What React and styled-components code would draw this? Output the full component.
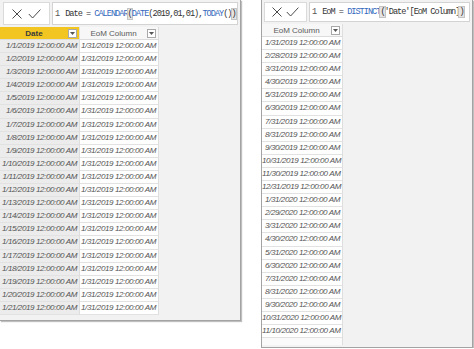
import React from 'react';
import styled, { createGlobalStyle } from 'styled-components';

const GlobalStyle = createGlobalStyle`
    body {
        margin: 0;
        background: #fff;
        font-family: "Liberation Sans", Arial, sans-serif;
    }
`

const Page = styled.div`
    display: flex;
    align-items: flex-start;
    gap: 20px;
`

const Panel = styled.div`
    box-sizing: border-box;
    width: ${props => props.width}px;
    height: ${props => props.height}px;
    background: #f2f2f2;
    border: 1px solid #a3a3a3;
    border-top: none;
    border-left: ${props => props.noLeft ? 'none' : '1px solid #a3a3a3'};
    box-shadow: 1px 1px 1px rgba(0, 0, 0, 0.25);
    display: flex;
    flex-direction: column;
`

const Bar = styled.div`
    box-sizing: border-box;
    height: ${props => props.height}px;
    display: flex;
    gap: 2px;
    padding: 2px 2px ${props => props.bottom}px ${props => props.left}px;
`

const ActionBox = styled.div`
    box-sizing: border-box;
    width: ${props => props.width}px;
    background: #fff;
    border: 1px solid #dadada;
    display: flex;
    align-items: center;
    justify-content: space-evenly;
    padding: 0 2px;
`

const FormulaBox = styled.div`
    box-sizing: border-box;
    flex: 1;
    background: #fff;
    border: 1px solid #d3d3d3;
    display: flex;
    align-items: center;
    padding-left: 2px;
    font-family: "Liberation Mono", "DejaVu Sans Mono", monospace;
    font-size: 8.6px;
    letter-spacing: -1px;
    color: #333;
    white-space: pre;
    overflow: hidden;
`

const LineNo = styled.span`
    color: #555;
    margin-right: 6px;
`

const Fn = styled.span`
    color: #3468bd;
`

const Paren = styled.span`
    background: #e4e4e4;
    outline: 1px solid #c4c4c4;
`

const Table = styled.div`
    display: flex;
    align-items: flex-start;
`

const Column = styled.div`
    box-sizing: border-box;
    width: ${props => props.width}px;
    display: flex;
    flex-direction: column;
    border-right: 1px solid #dedede;
`

const HeaderCell = styled.div`
    box-sizing: border-box;
    height: 13px;
    display: flex;
    align-items: center;
    padding-right: 2px;
    background: ${props => props.active ? '#f2c520' : '#f7f7f7'};
    border-bottom: 1px solid #dcdcdc;
    font-size: 8px;
    font-weight: ${props => props.active ? 700 : 400};
    color: ${props => props.active ? '#3b3b3b' : '#5a5a5a'};
`

const HeaderLabel = styled.span`
    flex: 1;
    text-align: center;
`

const Drop = styled.span`
    box-sizing: border-box;
    width: 9px;
    height: 9px;
    background: #fff;
    border: 1px solid #a9a9a9;
    display: flex;
    align-items: center;
    justify-content: center;
`

const Cell = styled.div`
    box-sizing: border-box;
    height: 13.1px;
    line-height: 12px;
    padding-right: 2px;
    text-align: right;
    background: ${props => props.shade ? '#ececec' : '#fff'};
    border-bottom: 1px solid #e2e2e2;
    font-style: italic;
    font-size: 8.1px;
    letter-spacing: -0.42px;
    color: #555;
    white-space: nowrap;
`

const Filler = styled.div`
    height: 7px;
    background: #fafafa;
`

const CloseIcon = () => (
    <svg width="10" height="10" viewBox="0 0 10 10">
        <path d="M0.5 0.5 L9.5 9.5 M9.5 0.5 L0.5 9.5" stroke="#4a4a4a" strokeWidth="1" fill="none" />
    </svg>
)

const CheckIcon = () => (
    <svg width="13" height="10" viewBox="0 0 13 10">
        <path d="M0.8 5 L4.6 9 L12.4 0.6" stroke="#4a4a4a" strokeWidth="1" fill="none" />
    </svg>
)

const Caret = () => (
    <svg width="5" height="3" viewBox="0 0 5 3">
        <path d="M0 0 H5 L2.5 3 Z" fill="#555" />
    </svg>
)

const fmt = (m, d, y) => `${m}/${d}/${y} 12:00:00 AM`

const dates = Array.from({ length: 21 }, (_, i) => fmt(1, i + 1, 2019))

const lastDays = [31, 28, 31, 30, 31, 30, 31, 31, 30, 31, 30, 31]
const months = [
    ...lastDays.map((d, i) => fmt(i + 1, d, 2019)),
    ...lastDays.slice(0, 10).map((d, i) => fmt(i + 1, i === 1 ? 29 : d, 2020)),
    fmt(11, 10, 2020),
]

const Header = ({ label, active }) => (
    <HeaderCell active={active}>
        <HeaderLabel>{label}</HeaderLabel>
        <Drop><Caret /></Drop>
    </HeaderCell>
)

export default function App() {
    return (
        <>
            <GlobalStyle />
            <Page>
                <Panel width={241} height={321} noLeft>
                    <Bar height={27} bottom={2} left={3}>
                        <ActionBox width={47}>
                            <CloseIcon />
                            <CheckIcon />
                        </ActionBox>
                        <FormulaBox>
                            <LineNo>1</LineNo>
                            Date = <Fn>CALENDAR</Fn><Paren>(</Paren><Fn>DATE</Fn>(2019,01,01),<Fn>TODAY</Fn>()<Paren>)</Paren>
                        </FormulaBox>
                    </Bar>
                    <Table>
                        <Column width={80}>
                            <Header label="Date" active />
                            {dates.map(d => <Cell key={d} shade>{d}</Cell>)}
                        </Column>
                        <Column width={79}>
                            <Header label="EoM Column" />
                            {dates.map(d => <Cell key={d}>1/31/2019 12:00:00 AM</Cell>)}
                        </Column>
                    </Table>
                </Panel>
                <Panel width={212} height={348}>
                    <Bar height={24} bottom={2} left={2}>
                        <ActionBox width={43}>
                            <CloseIcon />
                            <CheckIcon />
                        </ActionBox>
                        <FormulaBox>
                            <LineNo>1</LineNo>
                            EoM = <Fn>DISTINCT</Fn><Paren>(</Paren>'Date'[EoM Column]<Paren>)</Paren>
                        </FormulaBox>
                    </Bar>
                    <Table>
                        <Column width={81}>
                            <Header label="EoM Column" />
                            {months.map(d => <Cell key={d}>{d}</Cell>)}
                            <Filler />
                        </Column>
                    </Table>
                </Panel>
            </Page>
        </>
    )
}
